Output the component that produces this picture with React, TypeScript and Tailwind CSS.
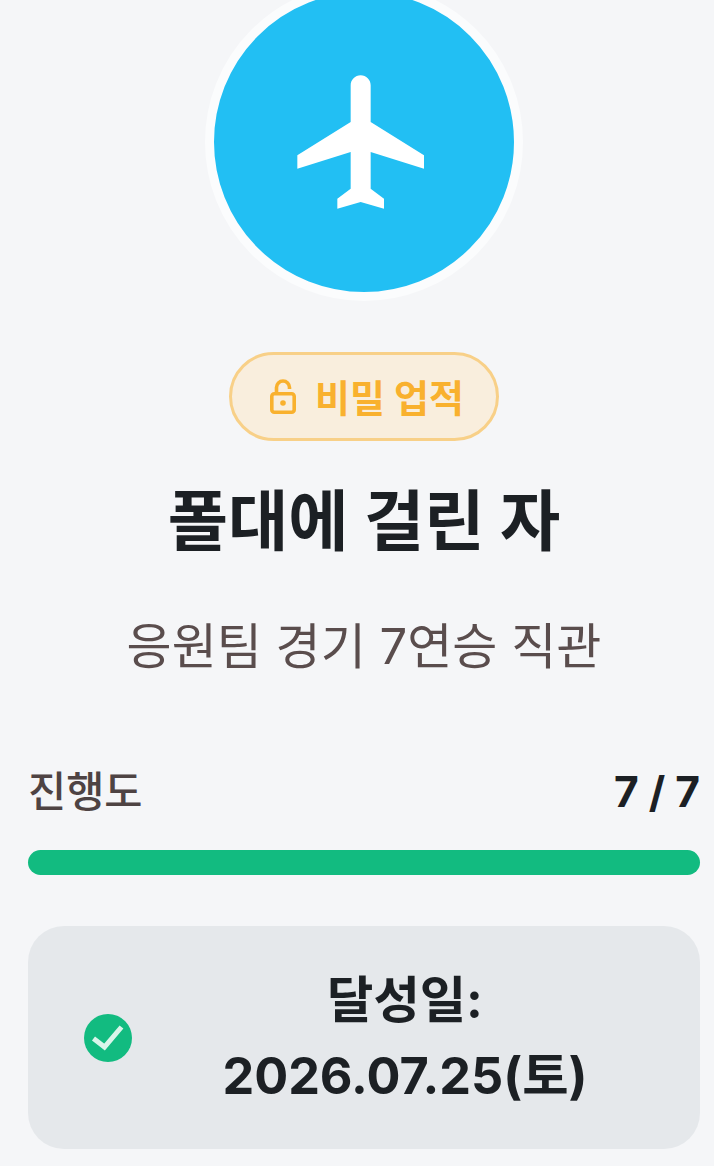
const sans = { fontFamily: 'Inter, "Noto Sans CJK KR", sans-serif' };

export default function App() {
  return (
    <div className="h-[1166px] w-[714px] overflow-hidden bg-[#f5f6f8] pl-7 pr-[14px]" style={sans}>
      <div className="flex flex-col items-center">
        {/* Badge icon */}
        <div className="-mt-[17px] flex h-[318px] w-[318px] items-center justify-center rounded-full border-[9px] border-[#fbfcfd] bg-[#22bff3]">
          <svg viewBox="0 0 24 24" className="h-40 w-40" fill="#ffffff">
            <path d="M21 16v-2l-8-5V3.5c0-.83-.67-1.5-1.5-1.5S10 2.67 10 3.5V9l-8 5v2l8-2.5V19l-2 1.5V22l3.5-1 3.5 1v-1.5L13 19v-5.5l8 2.5z" />
          </svg>
        </div>

        {/* Secret pill */}
        <div className="mt-[51px] flex h-[89px] w-[270px] items-center justify-center gap-[19px] rounded-full border-[3px] border-[#f8d088] bg-[#f9eedd] pl-[6px]">
          <svg viewBox="0 0 26 35" className="h-[35px] w-[26px]" fill="none" stroke="#f9b12e" strokeWidth="3.6">
            <rect x="1.8" y="14.8" width="22.4" height="18.4" rx="2.5" />
            <path d="M6.5 14V8.5a6.5 6.5 0 0 1 13 0V10" />
            <circle cx="13" cy="24" r="2.8" fill="#f9b12e" stroke="none" />
          </svg>
          <span className="mt-[2px] text-[38px] font-bold leading-none text-[#f9b12e]">비밀 업적</span>
        </div>

        <h1 className="mt-[37px] text-[65.5px] font-bold leading-[88px] text-[#1c2024]">폴대에 걸린 자</h1>
        <p className="mt-[49px] text-[49px] leading-[64px] text-[#5a4d4d]">응원팀 경기 7연승 직관</p>
      </div>

      {/* Progress */}
      <div className="mt-[85px] flex items-center justify-between">
        <span className="text-[41.5px] font-medium leading-[56px] text-[#4e4343]">진행도</span>
        <span className="text-[42.5px] font-bold leading-[56px] text-[#1c2024]">7 / 7</span>
      </div>
      <div className="mt-[30px] h-[25px] rounded-full bg-[#12bb80]" />

      {/* Achieved date */}
      <div className="mt-[51px] flex h-[223px] items-center gap-[6px] rounded-[36px] bg-[#e5e8eb] pl-[56px] pr-[28px]">
        <svg viewBox="0 0 48 48" className="h-12 w-12 shrink-0">
          <circle cx="24" cy="24" r="24" fill="#12bb80" />
          <path d="M9.5 24.5L20.5 33L37.5 13" fill="none" stroke="#d9f5ea" strokeWidth="5" />
        </svg>
        <div className="flex-1 text-center text-[50.4px] font-bold leading-[76px] text-[#1c2024]">
          달성일:
          <br />
          2026.07.25(토)
        </div>
      </div>
    </div>
  );
}
